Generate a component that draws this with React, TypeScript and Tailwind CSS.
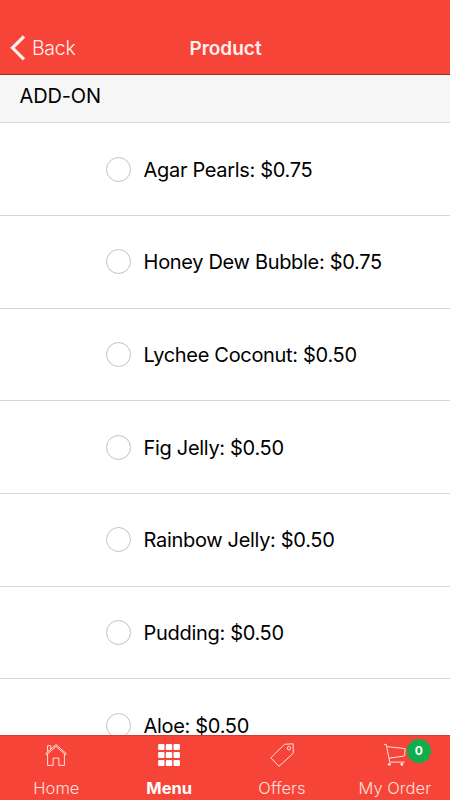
import type { ReactNode } from 'react';

interface AddOn {
  name: string;
  price: string;
}

const addOns: AddOn[] = [
  { name: 'Agar Pearls', price: '$0.75' },
  { name: 'Honey Dew Bubble', price: '$0.75' },
  { name: 'Lychee Coconut', price: '$0.50' },
  { name: 'Fig Jelly', price: '$0.50' },
  { name: 'Rainbow Jelly', price: '$0.50' },
  { name: 'Pudding', price: '$0.50' },
  { name: 'Aloe', price: '$0.50' },
];

const HomeIcon = () => (
  <svg width="24" height="24" viewBox="0 0 24 24" fill="none" stroke="currentColor" strokeWidth="1">
    <path d="M1.6 10.7 12 1.6l10.4 9.1-.9 1L12 3.5l-9.5 8.2z" />
    <path d="M3.6 10.8v11.6h5.5v-7.3h5.8v7.3h5.5V10.8M3.6 9V2.7h3.2v3.4" />
  </svg>
);

const MenuIcon = () => (
  <svg width="24" height="24" viewBox="0 0 24 24" fill="currentColor">
    {[1, 9, 17].map((y) =>
      [1.1, 8.8, 16.5].map((x) => (
        <rect key={`${x}-${y}`} x={x} y={y} width="6.4" height="5.9" rx="1" />
      ))
    )}
  </svg>
);

const TagIcon = () => (
  <svg width="24" height="24" viewBox="0 0 24 24" fill="none" stroke="currentColor" strokeWidth="1">
    <path d="M14.6 1.3 23.1.8l.2 9.3L9 23.3.8 14.8z" />
    <circle cx="18.9" cy="5.2" r="1.7" />
  </svg>
);

const CartIcon = () => (
  <svg width="24" height="24" viewBox="0 0 24 24" fill="none" stroke="currentColor" strokeWidth="1">
    <path d="M.8 1.4h2.4l3.6 17.7h15M3.8 3.6l18.4 2-.6 7.4-15.8 2.2" />
    <circle cx="6.4" cy="21.3" r="1.1" fill="currentColor" />
    <circle cx="18.9" cy="21.3" r="1.1" fill="currentColor" />
  </svg>
);

interface TabProps {
  label: string;
  icon: ReactNode;
  active?: boolean;
  badge?: number;
}

const Tab = ({ label, icon, active = false, badge }: TabProps) => (
  <button
    className={`flex w-[112.8px] shrink-0 flex-col items-center pt-[7px] ${active ? 'text-white' : 'text-[#ffe0dc]'}`}
  >
    <span className="relative h-6 w-6">
      {icon}
      {badge !== undefined && (
        <span className="absolute -top-[4px] left-[24px] flex h-6 w-6 items-center justify-center rounded-full bg-[#12ad4b] text-[12px] font-bold text-white">
          {badge}
        </span>
      )}
    </span>
    <span
      className={`mt-[9px] whitespace-nowrap text-[16.5px] leading-6 ${active ? 'font-bold' : 'font-light tracking-[0.05px]'}`}
    >
      {label}
    </span>
  </button>
);

export default function App() {
  return (
    <div className="flex h-[800px] w-[450px] flex-col overflow-hidden bg-white font-['Inter',sans-serif] text-black">
      <header className="grid h-[75px] shrink-0 grid-cols-3 items-center border-b border-[#a92c22] bg-[#f74439] pt-[22px] text-[#ffefed]">
        <button className="flex items-center pl-[10px] text-[19.5px] font-light">
          <svg width="16" height="26" viewBox="0 0 16 26" fill="none" stroke="currentColor" strokeWidth="3.2">
            <path d="M14 1.5 2.5 12.8 14 24.3" />
          </svg>
          <span className="ml-[6px] pt-[2px] tracking-[-0.3px]">Back</span>
        </button>
        <h1 className="pl-px pt-[2px] text-center text-[19px] font-semibold">Product</h1>
      </header>

      <main className="min-h-0 flex-1 overflow-hidden">
        <h2 className="h-[48px] border-b border-[#d9d9d9] bg-[#f6f6f6] pl-[19.5px] pt-[6px] text-[20px] leading-[30px] tracking-[-0.15px]">
          ADD-ON
        </h2>
        <ul className="pt-[0.3px]">
          {addOns.map((item) => (
            <li key={item.name} className="flex h-[92.7px] items-center border-b border-[#d6d6d6] pl-[106px]">
              <span className="h-[25px] w-[25px] rounded-full border border-[#c2c2c2]" />
              <span className="ml-[12.6px] pt-px text-[20px] leading-[30px] tracking-[-0.32px]">
                {item.name}: {item.price}
              </span>
            </li>
          ))}
        </ul>
      </main>

      <nav className="flex h-[65px] shrink-0 overflow-hidden border-t border-[#d63b31] bg-[#f74439]">
        <Tab label="Home" icon={<HomeIcon />} />
        <Tab label="Menu" icon={<MenuIcon />} active />
        <Tab label="Offers" icon={<TagIcon />} />
        <Tab label="My Order" icon={<CartIcon />} badge={0} />
      </nav>
    </div>
  );
}
